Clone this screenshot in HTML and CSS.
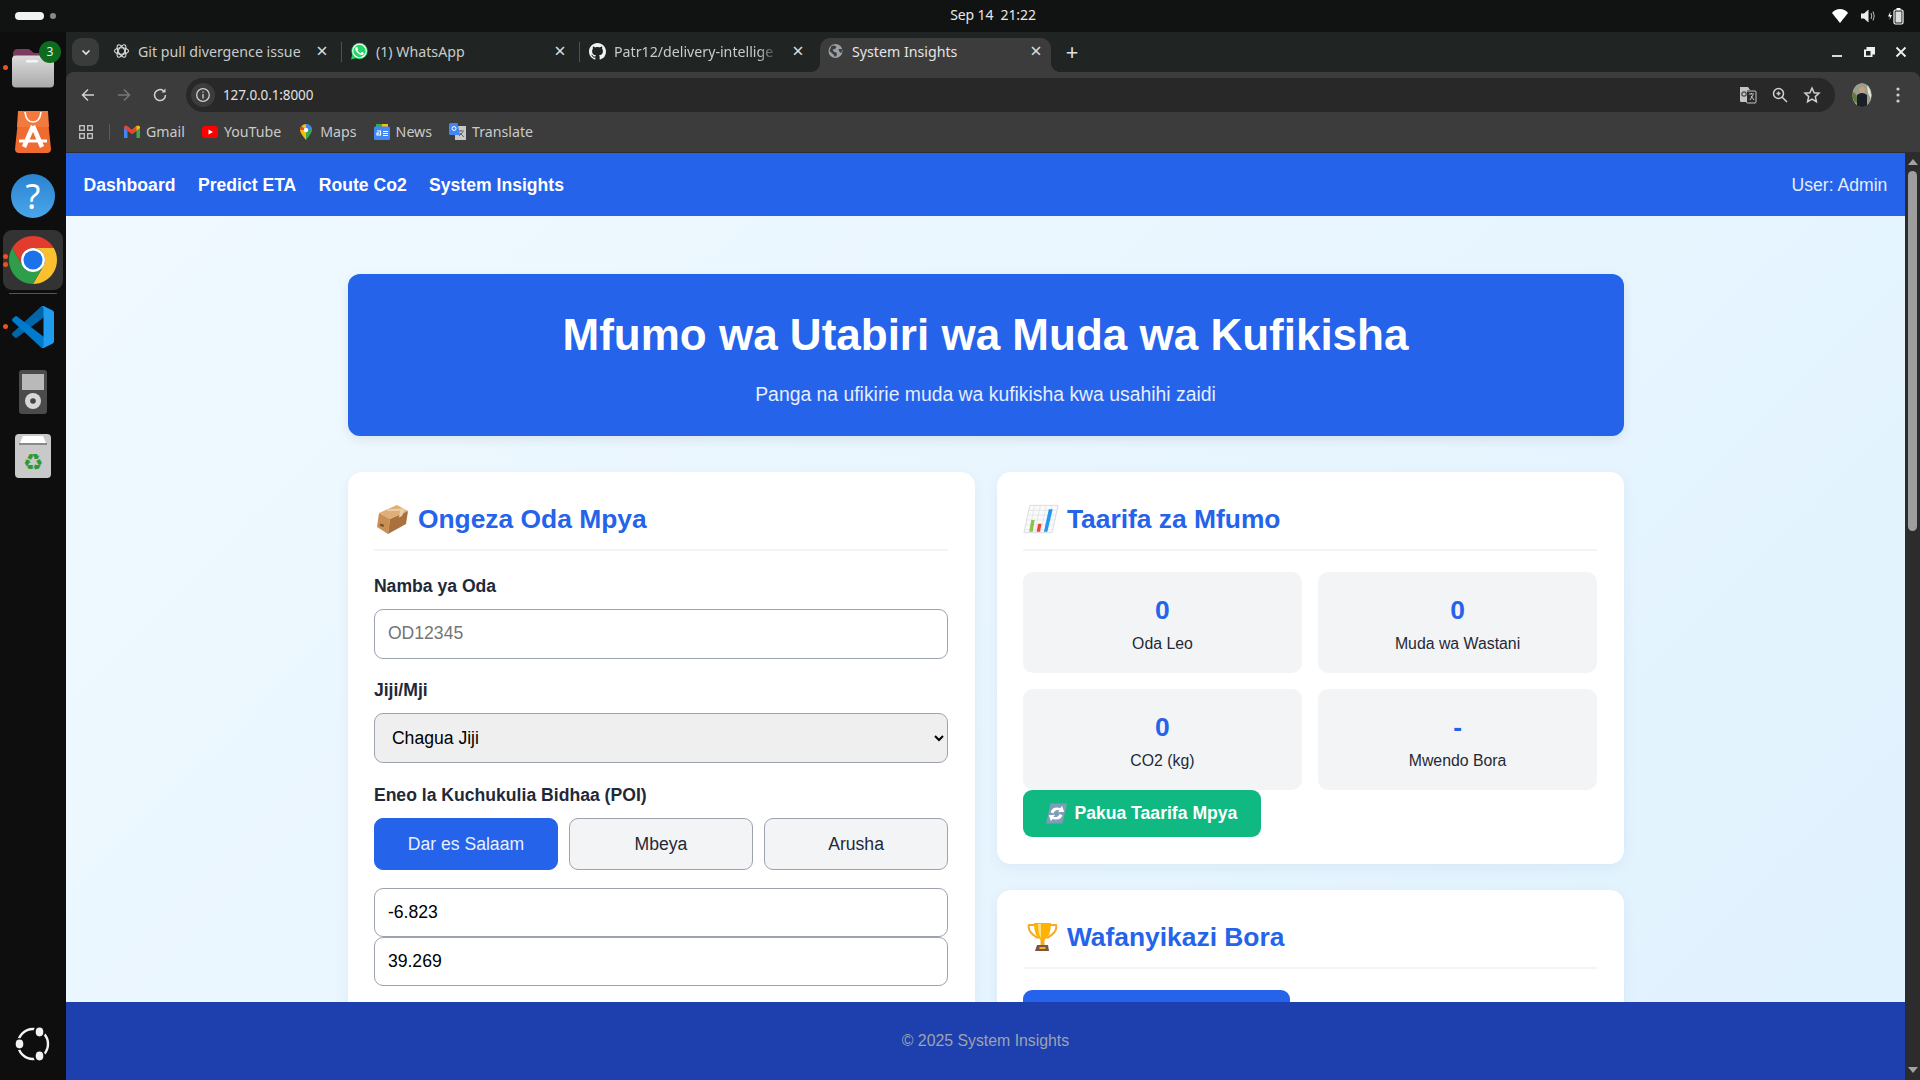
FILE: index.html
```html
<!DOCTYPE html>
<html lang="sw">
<head>
<meta charset="utf-8">
<title>System Insights</title>
<link rel="stylesheet" href="styles.css">
</head>
<body>
<div class="desktop">
  <header class="topbar">
    <div class="workspaces"><span class="ws-pill"></span><span class="ws-dot"></span></div>
    <div class="clock">Sep 14&nbsp;&nbsp;21:22</div>
    <div class="tray">
      <svg width="18" height="16" viewBox="0 0 18 16"><path d="M1 5C5-.3 13-.3 17 5L9 15Z" fill="#fff"/></svg>
      <svg width="16" height="16" viewBox="0 0 16 16"><path d="M1 5.500H4L8.500 1.500V14.500L4 10.500H1Z" fill="#eee"/><path d="M11 5Q12.500 8 11 11M13 3.500Q15.500 8 13 12.500" stroke="#bbb" fill="none"/></svg>
      <svg width="18" height="18" viewBox="0 0 18 18"><path d="M3.500 4.500 1 9.500H3L2.500 13 5 8H3Z" fill="#fff"/><rect x="7" y="3" width="9" height="14" rx="1.500" fill="none" stroke="#fff" stroke-width="1.200"/><rect x="9.500" y="1" width="4" height="2" fill="#fff"/><rect x="8.500" y="4.500" width="6" height="11" fill="#ddd"/></svg>
    </div>
  </header>

  <div class="workarea">
    <nav class="dock">
      <div class="dock-slot">
        <span class="run-dot"></span>
        <svg width="46" height="44" viewBox="0 0 46 44"><path d="M3 8Q3 3 8 3H19L24 7H38Q42 7 42 11V20H3Z" fill="#7c3a5e"/><rect x="2" y="9.500" width="42" height="32" rx="4" fill="url(#fg)"/><rect x="16" y="14" width="12" height="2.500" rx="1" fill="#f4f4f4"/><defs><linearGradient id="fg" x1="0" y1="0" x2="0" y2="1"><stop offset="0" stop-color="#dcdcdc"/><stop offset="1" stop-color="#a9a9a9"/></linearGradient></defs></svg>
        <span class="dock-badge">3</span>
      </div>
      <div class="dock-slot">
        <svg width="36" height="42" viewBox="0 0 36 42"><path d="M4 0H32L36 38Q36 42 32 42H4Q0 42 0 38Z" fill="#ef6b2f"/><path d="M3 0H33L34 16H2Z" fill="#f27a3f"/><path d="M10 1Q11 11 18 11T26 1" fill="none" stroke="#fff" stroke-width="1.600"/><path d="M18 15 9 36M18 15 27 36" stroke="#fff" stroke-width="4.500" fill="none"/><path d="M4 30H32" stroke="#fff" stroke-width="3"/></svg>
      </div>
      <div class="dock-slot">
        <span class="help-icon">?</span>
      </div>
      <div class="dock-slot dock-active">
        <span class="run-dot run-dot-a"></span><span class="run-dot run-dot-b"></span>
        <svg width="48" height="48" viewBox="0 0 48 48"><path d="M24 12H44.780A24 24 0 0 0 3.220 12L13.600 30A12 12 0 0 1 24 12Z" fill="#e33b2e"/><path d="M24 12H44.780A24 24 0 0 1 24 48L34.400 30A12 12 0 0 0 24 12Z" fill="#fbc02d"/><path d="M3.220 12A24 24 0 0 0 24 48L34.400 30A12 12 0 0 1 13.600 30Z" fill="#2f9e4b"/><circle cx="24" cy="24" r="12" fill="#fff"/><circle cx="24" cy="24" r="9.500" fill="#1a73e8"/></svg>
      </div>
      <div class="dock-sep"></div>
      <div class="dock-slot dock-shift">
        <span class="run-dot"></span>
        <svg width="42" height="42" viewBox="0 0 100 100"><path d="M96.460 10.800 75.860.870a6.230 6.230 0 0 0-7.100 1.210L1.330 63.570a4.170 4.170 0 0 0 0 6.160l5.510 5.010a4.170 4.170 0 0 0 5.320.240L93.390 13.800c2.730-2.070 6.640-.130 6.640 3.300v-.240a6.250 6.250 0 0 0-3.540-5.630z" fill="#0065a9"/><path d="M96.460 89.200 75.860 99.130a6.230 6.230 0 0 1-7.100-1.210L1.330 36.430a4.170 4.170 0 0 1 0-6.160l5.510-5.010a4.170 4.170 0 0 1 5.320-.240l81.230 61.620c2.730 2.070 6.640.130 6.640-3.300v.240a6.250 6.250 0 0 1-3.540 5.630z" fill="#007acc"/><path d="M75.860 99.130a6.220 6.220 0 0 1-7.100-1.200c2.300 2.300 6.240.670 6.240-2.590V4.660c0-3.260-3.940-4.890-6.240-2.590a6.220 6.220 0 0 1 7.100-1.200l20.600 9.910A6.250 6.250 0 0 1 100 16.400v67.200a6.250 6.250 0 0 1-3.540 5.630z" fill="#1f9cf0"/></svg>
      </div>
      <div class="dock-slot">
        <svg width="28" height="44" viewBox="0 0 28 44"><rect width="28" height="44" rx="3" fill="#4b4b4b"/><rect x="3" y="4" width="22" height="16" fill="#b9b9b9"/><circle cx="14" cy="31" r="8" fill="#d6d6d6"/><circle cx="14" cy="31" r="2.800" fill="#444"/></svg>
      </div>
      <div class="dock-slot">
        <svg width="36" height="44" viewBox="0 0 36 44"><rect width="36" height="44" rx="4" fill="#c9c9c9"/><path d="M5 9 8 2H28L31 9Z" fill="#fff"/><rect x="4" y="9" width="28" height="2" fill="#8a8a8a"/><text x="18" y="36" class="recycle">♻</text></svg>
      </div>
      <div class="dock-slot dock-bottom">
        <svg width="36" height="36" viewBox="0 0 36 36"><circle cx="18" cy="18" r="15" fill="none" stroke="#f2f2f2" stroke-width="2.400"/><circle cx="24.500" cy="5.500" r="6" fill="#0e0e0e"/><circle cx="24.500" cy="30.500" r="6" fill="#0e0e0e"/><circle cx="4" cy="18" r="6" fill="#0e0e0e"/><ellipse cx="24.500" cy="6" rx="3.800" ry="4.400" fill="#f2f2f2"/><ellipse cx="24.500" cy="30" rx="3.800" ry="4.400" fill="#f2f2f2"/><ellipse cx="4.500" cy="18" rx="3.800" ry="4.400" fill="#f2f2f2"/></svg>
      </div>
    </nav>

    <div class="browser">
      <div class="tabstrip">
        <button class="tab-search"><svg width="12" height="12" viewBox="0 0 12 12"><path d="M2.500 4.500 6 8l3.500-3.500" fill="none" stroke="#e6e6e6" stroke-width="1.600"/></svg></button>
        <div class="tab">
          <svg class="tab-ico" width="16" height="16" viewBox="0 0 16 16" fill="none" stroke="#ddd" stroke-width="1.100"><ellipse cx="8" cy="8" rx="7" ry="3.200"/><ellipse cx="8" cy="8" rx="7" ry="3.200" transform="rotate(60 8 8)"/><ellipse cx="8" cy="8" rx="7" ry="3.200" transform="rotate(120 8 8)"/></svg>
          <span class="tab-title">Git pull divergence issue</span><span class="tab-close">×</span>
        </div>
        <span class="tab-sep"></span>
        <div class="tab">
          <svg class="tab-ico" width="18" height="18" viewBox="0 0 24 24"><circle cx="12" cy="12" r="11.500" fill="#25d366"/><path d="M0 24 2 16 8 22Z" fill="#25d366"/><circle cx="12" cy="12" r="9.500" fill="#25d366" stroke="#fff" stroke-width="1.600"/><path d="M17.472 14.382c-.297-.149-1.758-.867-2.030-.967-.273-.099-.471-.148-.670.150-.197.297-.767.966-.940 1.164-.173.199-.347.223-.644.075-.297-.150-1.255-.463-2.390-1.475-.883-.788-1.480-1.761-1.653-2.059-.173-.297-.018-.458.130-.606.134-.133.298-.347.446-.520.149-.174.198-.298.298-.497.099-.198.050-.371-.025-.520-.075-.149-.669-1.612-.916-2.207-.242-.579-.487-.500-.669-.510-.173-.008-.371-.010-.570-.010-.198 0-.520.074-.792.372-.272.297-1.040 1.016-1.040 2.479 0 1.462 1.065 2.875 1.213 3.074.149.198 2.096 3.200 5.077 4.487.709.306 1.262.489 1.694.625.712.227 1.360.195 1.871.118.571-.085 1.758-.719 2.006-1.413.248-.694.248-1.289.173-1.413-.074-.124-.272-.198-.570-.347" fill="#fff"/></svg>
          <span class="tab-title">(1) WhatsApp</span><span class="tab-close">×</span>
        </div>
        <span class="tab-sep"></span>
        <div class="tab">
          <svg class="tab-ico" width="17" height="17" viewBox="0 0 16 16"><path fill="#f2f2f2" d="M8 0C3.580 0 0 3.580 0 8c0 3.540 2.290 6.530 5.470 7.590.400.070.550-.170.550-.380 0-.190-.010-.820-.010-1.490-2.010.370-2.530-.490-2.690-.940-.090-.230-.480-.940-.820-1.130-.280-.150-.680-.520-.010-.530.630-.010 1.080.580 1.230.820.720 1.210 1.870.870 2.330.660.070-.520.280-.870.510-1.070-1.780-.200-3.640-.890-3.640-3.950 0-.870.310-1.590.820-2.150-.080-.200-.360-1.020.080-2.120 0 0 .670-.210 2.200.820.640-.180 1.320-.270 2-.270s1.360.090 2 .270c1.530-1.040 2.200-.820 2.200-.820.440 1.100.160 1.920.080 2.120.510.560.820 1.270.820 2.150 0 3.070-1.870 3.750-3.650 3.950.290.250.540.730.540 1.480 0 1.070-.010 1.930-.010 2.200 0 .210.150.460.550.380A8.013 8.013 0 0016 8c0-4.420-3.580-8-8-8z"/></svg>
          <span class="tab-title tab-fade">Patr12/delivery-intellige</span><span class="tab-close">×</span>
        </div>
        <div class="tab tab-active">
          <svg class="tab-ico" width="14" height="14" viewBox="0 0 14 14"><circle cx="7" cy="7" r="7" fill="#9aa0a6"/><path d="M3 2 6 1.500 8 3 6.500 5 4 5.500 5.500 8 8 8.500 8.500 11 6.500 13 5 10.500 1 7ZM10 5H13.500L13 9 11 8Z" fill="#3c3c3c"/></svg>
          <span class="tab-title">System Insights</span><span class="tab-close">×</span>
        </div>
        <span class="tab-new">+</span>
        <div class="win-controls">
          <svg width="32" height="16" viewBox="0 0 32 16"><path d="M11 12H21" stroke="#f0f0f0" stroke-width="1.800"/></svg>
          <svg width="32" height="16" viewBox="0 0 32 16"><path d="M13.500 3H22V10.500H19.500V13H11V5.500H13.500Z" fill="#f0f0f0"/><rect x="13" y="7" width="4.500" height="4.500" fill="#202423"/></svg>
          <svg width="32" height="16" viewBox="0 0 32 16"><path d="M11.500 3.500 20.500 12.500M20.500 3.500 11.500 12.500" stroke="#f0f0f0" stroke-width="1.800"/></svg>
        </div>
      </div>

      <div class="toolbar">
        <div class="addr-row">
          <span class="tb-btn"><svg width="16" height="16" viewBox="0 0 16 16" fill="none" stroke="#d0d0d0" stroke-width="1.500"><path d="M14 8H2.500M8 2.500 2.500 8 8 13.500"/></svg></span>
          <span class="tb-btn"><svg width="16" height="16" viewBox="0 0 16 16" fill="none" stroke="#777" stroke-width="1.500"><path d="M2 8H13.500M8 2.500 13.500 8 8 13.500"/></svg></span>
          <span class="tb-btn"><svg width="16" height="16" viewBox="0 0 16 16" fill="none" stroke="#d0d0d0" stroke-width="1.500"><path d="M13.500 8A5.500 5.500 0 1 1 11.500 3.800"/><path d="M13.500 1.500V5.500H9.500" fill="#d0d0d0" stroke="none"/></svg></span>
          <div class="omnibox">
            <span class="site-info"><svg width="16" height="16" viewBox="0 0 16 16" fill="none" stroke="#d0d0d0" stroke-width="1.300"><circle cx="8" cy="8" r="6.300"/><path d="M8 7V11.500M8 4.500V5.800"/></svg></span>
            <span class="url">127.0.0.1:8000</span>
            <div class="omni-actions">
              <span class="omni-btn"><svg width="18" height="18" viewBox="0 0 18 18"><path d="M1 1H9L11 4H8L9 16H2Q1 16 1 15Z" fill="#c4c4c4"/><rect x="7.500" y="5" width="9.500" height="12" rx="1" fill="#2a2a2a" stroke="#c4c4c4"/><path d="M10 8H15M12.500 7V8M11 14 14 9M12 10 15 14" stroke="#c4c4c4" fill="none"/><circle cx="5" cy="8" r="2.200" fill="none" stroke="#444" stroke-width="1.200"/></svg></span>
              <span class="omni-btn"><svg width="18" height="18" viewBox="0 0 18 18" fill="none" stroke="#d0d0d0" stroke-width="1.500"><circle cx="7.500" cy="7.500" r="5"/><path d="M11 11 16 16M5.500 7.500H9.500M7.500 5.500V9.500"/></svg></span>
              <span class="omni-btn"><svg width="18" height="18" viewBox="0 0 18 18" fill="none" stroke="#d0d0d0" stroke-width="1.500"><path d="M9 2 11.100 6.700 16 7.200 12.300 10.600 13.400 15.700 9 13.100 4.600 15.700 5.700 10.600 2 7.200 6.900 6.700Z"/></svg></span>
            </div>
          </div>
          <span class="avatar"><svg width="20" height="24" viewBox="0 0 20 24"><ellipse cx="10" cy="12" rx="10" ry="12" fill="#9a9f8c"/><path d="M0 12Q2 6 5 14V20L2 18Z" fill="#5e7a3c"/><path d="M5 24V12Q10 8 15 12V24Z" fill="#1a1f2a"/><circle cx="10" cy="7" r="3" fill="#c89f84"/><path d="M15 2Q20 8 19 16L16 10Z" fill="#e4e4e0"/></svg></span>
          <span class="menu-btn"><svg width="4" height="16" viewBox="0 0 4 16"><circle cx="2" cy="2" r="1.600" fill="#d0d0d0"/><circle cx="2" cy="8" r="1.600" fill="#d0d0d0"/><circle cx="2" cy="14" r="1.600" fill="#d0d0d0"/></svg></span>
        </div>
        <div class="bookmarks">
          <svg class="apps" width="14" height="14" viewBox="0 0 14 14" fill="none" stroke="#c8c8c8" stroke-width="1.300"><rect x=".7" y=".7" width="4.600" height="4.600"/><rect x="8.700" y=".7" width="4.600" height="4.600"/><rect x=".7" y="8.700" width="4.600" height="4.600"/><rect x="8.700" y="8.700" width="4.600" height="4.600"/></svg>
          <span class="bm-sep"></span>
          <a class="bm"><svg width="16" height="14" viewBox="0 0 16 14"><path d="M0 2.500V13H3.500V5.500Z" fill="#4285f4"/><path d="M16 2.500V13H12.500V5.500Z" fill="#34a853"/><path d="M0 2Q1-.5 3.500 1L8 5 8 9 0 3Z" fill="#ea4335"/><path d="M16 2Q15-.5 12.500 1L8 5 8 9 16 3Z" fill="#fbbc04"/><path d="M3.500 1.500 8 5.200 12.500 1.500V5.500L8 9 3.500 5.500Z" fill="#ea4335"/></svg><span>Gmail</span></a>
          <a class="bm"><svg width="16" height="12" viewBox="0 0 16 12"><rect width="16" height="12" rx="3" fill="#f00"/><path d="M6.500 3.500 11 6 6.500 8.500Z" fill="#fff"/></svg><span>YouTube</span></a>
          <a class="bm"><svg width="16" height="16" viewBox="-2 0 16 16"><path d="M6 0A6 6 0 0 1 12 6Q12 9 6 16Z" fill="#34a853"/><path d="M6 0A6 6 0 0 0 0 6Q0 9 6 16Z" fill="#fbbc04"/><path d="M6 0A6 6 0 0 1 12 6H6Z" fill="#4285f4"/><path d="M1.500 2 6 6H0Q0 3.500 1.500 2Z" fill="#ea4335"/><circle cx="6" cy="6" r="2.200" fill="#fff"/></svg><span>Maps</span></a>
          <a class="bm"><svg width="16" height="16" viewBox="0 0 16 16"><rect x="2" y="0" width="12" height="5" fill="#34a853"/><rect x="8" y="0" width="6" height="5" fill="#fbbc04"/><rect y="2.500" width="16" height="13.500" rx="1.500" fill="#4285f4"/><path d="M3 7H6.500V11H3V9.200H5M9 7.500H14M9 9.500H14M9 11.500H14" fill="none" stroke="#fff" stroke-width="1.200"/></svg><span>News</span></a>
          <a class="bm"><svg width="17" height="17" viewBox="0 0 17 17"><rect x="6" y="3" width="11" height="14" fill="#c8c8c8"/><path d="M9 8H15M12 7V8M10 13 14 9M11 10 15 14" stroke="#666" fill="none"/><path d="M1.500 0H8.500L11 12H1.500Q0 12 0 10.500V1.500Q0 0 1.500 0Z" fill="#4285f4"/><circle cx="5" cy="5.500" r="2" fill="none" stroke="#fff"/></svg><span>Translate</span></a>
        </div>
      </div>

      <div class="viewport">
        <div class="page">
          <header class="app-nav">
            <div class="nav-links">
              <a class="nav-link">Dashboard</a>
              <a class="nav-link">Predict ETA</a>
              <a class="nav-link">Route Co2</a>
              <a class="nav-link">System Insights</a>
            </div>
            <div class="nav-user">User: Admin</div>
          </header>

          <main class="content">
            <div class="container">
              <section class="hero">
                <h1>Mfumo wa Utabiri wa Muda wa Kufikisha</h1>
                <p>Panga na ufikirie muda wa kufikisha kwa usahihi zaidi</p>
              </section>
              <div class="columns">
                <section class="card card-long">
                  <h2 class="card-title">
                    <svg class="emoji-box" width="33" height="30" viewBox="0 0 33 30"><path d="M3 9 21 1 32 7 14 15Z" fill="#e0ae78"/><path d="M3 9 14 15 12 30 1 23Z" fill="#c98f55"/><path d="M14 15 32 7 30 20 12 30Z" fill="#a9713d"/><path d="M9 5.500 27 4.500 29 5.500 26 12 23 13.500 24 6.800 12 7Z" fill="#ecd0aa"/><rect x="4" y="20" width="4" height="2.500" fill="#7a5230" transform="rotate(20 6 21)"/></svg>
                    <span>Ongeza Oda Mpya</span>
                  </h2>
                  <div class="field">
                    <label class="field-label">Namba ya Oda</label>
                    <input class="text-input" type="text" placeholder="OD12345">
                  </div>
                  <div class="field">
                    <label class="field-label">Jiji/Mji</label>
                    <select class="select-input"><option>Chagua Jiji</option></select>
                  </div>
                  <div class="field field-poi">
                    <label class="field-label">Eneo la Kuchukulia Bidhaa (POI)</label>
                    <div class="poi-row">
                      <button class="poi poi-on">Dar es Salaam</button>
                      <button class="poi">Mbeya</button>
                      <button class="poi">Arusha</button>
                    </div>
                  </div>
                  <input class="text-input coord" type="text" value="-6.823">
                  <input class="text-input coord" type="text" value="39.269">
                </section>

                <div class="side">
                  <section class="card">
                    <h2 class="card-title">
                      <svg class="emoji-chart" width="36" height="30" viewBox="0 0 37 30"><path d="M7 1H36L30 29H1Z" fill="#fafafa" stroke="#d9dde0"/><path d="M6 6H35M5 11H34M4 16H33M3 21H32M2 26H31M12 1 6 29M18 1 12 29M24 1 18 29M30 1 24 29" stroke="#dfe3e6" stroke-width=".8"/><path d="M6.500 28 8.500 16H12L10 28Z" fill="#8bc34a"/><path d="M14 28 15.500 20H19L17.500 28Z" fill="#f44336"/><path d="M21.500 28 26.500 5H30.500L25 28Z" fill="#2196f3"/></svg>
                      <span>Taarifa za Mfumo</span>
                    </h2>
                    <div class="stats">
                      <div class="stat"><div class="stat-num">0</div><div class="stat-lab">Oda Leo</div></div>
                      <div class="stat"><div class="stat-num">0</div><div class="stat-lab">Muda wa Wastani</div></div>
                      <div class="stat"><div class="stat-num">0</div><div class="stat-lab">CO2 (kg)</div></div>
                      <div class="stat"><div class="stat-num">-</div><div class="stat-lab">Mwendo Bora</div></div>
                    </div>
                    <button class="refresh">
                      <svg width="21" height="21" viewBox="0 0 23 22"><path d="M5 0H23L18 22H0Z" fill="#7f9cb8"/><path d="M5 9.500Q7 2.500 16 5L17.500 2.500 20 9 13 9.500 15 7.500Q10 6 8 11ZM18 13Q16 19.500 7 17L5.500 19.500 3 13 10 12.500 8 14.500Q13 16 15 11.500Z" fill="#fff"/></svg>
                      <span>Pakua Taarifa Mpya</span>
                    </button>
                  </section>
                  <section class="card">
                    <h2 class="card-title">
                      <svg class="emoji-chart" width="36" height="30" viewBox="-3 0 36 30"><path d="M9 3H3Q1 10 12 16M24 3H30Q32 10 21 16" fill="none" stroke="#f9a825" stroke-width="2"/><path d="M8 1H25Q25 15 18 18H15Q8 15 8 1Z" fill="#ffb300"/><path d="M12 2H15V16Q12 12 12 2Z" fill="#ffe082"/><rect x="14.500" y="17" width="4" height="6" fill="#f9a825"/><path d="M11 23H22L23 29H9Z" fill="#795548"/><rect x="13.500" y="25" width="6" height="2" fill="#ffb300"/></svg>
                      <span>Wafanyikazi Bora</span>
                    </h2>
                    <button class="primary-btn" aria-label="Wafanyikazi Bora"></button>
                  </section>
                </div>
              </div>
            </div>
          </main>

          <footer class="app-footer">© 2025 System Insights</footer>
        </div>
        <aside class="scrollbar">
          <span class="sb-up"></span>
          <span class="sb-thumb"></span>
          <span class="sb-down"></span>
        </aside>
      </div>
    </div>
  </div>
</div>
</body>
</html>
```
FILE: styles.css
```css
* { box-sizing: border-box; }
html, body { margin: 0; height: 100%; overflow: hidden; }
body { font-family: "Liberation Sans", Arial, sans-serif; font-size: 17.6px; background: #111; }

.desktop { width: 1920px; height: 1080px; display: flex; flex-direction: column; }

/* GNOME top bar */
.topbar { height: 32px; flex: none; background: #111212; display: grid; grid-template-columns: 1fr auto 1fr; align-items: center; padding: 0 15px; color: #e8e8e8; font: 14px "Noto Sans", sans-serif; }
.workspaces { display: flex; align-items: center; gap: 6px; }
.ws-pill { width: 29px; height: 8px; border-radius: 4px; background: #f2f2f2; }
.ws-dot { width: 6px; height: 6px; border-radius: 50%; background: #8a8a8a; }
.clock { margin-left: 66px; text-align: center; white-space: nowrap; letter-spacing: -.1px; padding-bottom: 3px; }
.tray { display: flex; justify-content: flex-end; align-items: center; gap: 11px; }

.workarea { flex: 1; min-height: 0; display: flex; }

/* dock */
.dock { width: 66px; flex: none; background: #0e0e0e; display: flex; flex-direction: column; padding-top: 4px; padding-bottom: 4px; }
.dock-slot { position: relative; height: 64px; flex: none; display: flex; align-items: center; justify-content: center; }
.dock-active { background: #333; border-radius: 9px; margin: 2px 3px; height: 60px; }
.dock-sep { height: 1px; background: #555; margin: 1px 9px 1px; flex: none; }
.dock-shift { margin-bottom: 1px; }
.dock-bottom { margin-top: auto; }
.run-dot { position: absolute; left: 3px; top: 29px; width: 5px; height: 5px; border-radius: 50%; background: #e95420; }
.dock-active .run-dot { left: 0; }
.dock-active .run-dot-a { top: 24px; }
.dock-active .run-dot-b { top: 32px; }
.dock-badge { position: absolute; left: 39px; top: 5px; width: 22px; height: 22px; border-radius: 50%; background: #0c6b1c; color: #e8f0e8; font: 12px/22px "Noto Sans", sans-serif; text-align: center; }
.help-icon { width: 44px; height: 44px; border-radius: 50%; background: linear-gradient(#2b83d0, #4aa6ea); color: #fff; font: 400 34px/44px "Noto Sans", sans-serif; text-align: center; }
.recycle { font-family: "DejaVu Sans", sans-serif; font-size: 23px; fill: #2e9a35; text-anchor: middle; }

/* browser chrome */
.browser { flex: 1; min-width: 0; display: flex; flex-direction: column; background: #202423; }
.tabstrip { height: 40px; flex: none; display: flex; align-items: flex-end; padding-left: 6px; background: #202423; color: #c9cbca; font: 14.2px "Noto Sans", sans-serif; }
.tab-search { width: 27px; height: 28px; align-self: flex-start; margin-top: 6px; margin-right: 5px; border: 0; border-radius: 9px; background: #3a3c3c; display: flex; align-items: center; justify-content: center; padding: 0; }
.tab { position: relative; width: 237px; height: 34px; flex: none; display: flex; align-items: center; padding: 0 10px 8px 0; }
.tab-ico { flex: none; margin-left: 9px; margin-right: 8px; width: 17px; }
.tab-title { flex: 1; min-width: 0; white-space: nowrap; overflow: hidden; }
.tab-fade { margin-right: 8px; -webkit-mask-image: linear-gradient(90deg, #000 86%, transparent 99%); mask-image: linear-gradient(90deg, #000 86%, transparent 99%); }
.tab-close { width: 18px; flex: none; text-align: center; font-size: 20px; line-height: 20px; color: #dcdcdc; }
.tab-sep { width: 1px; height: 20px; background: #4e5150; flex: none; align-self: flex-end; margin-bottom: 10px; }
.tab-active { width: 231px; margin-left: 3px; background: #3c3c3c; border-radius: 10px 10px 0 0; color: #e4e4e4; padding-right: 6px; }
.tab-active .tab-ico { margin-left: 7px; margin-right: 8px; }
.tab-active::before, .tab-active::after { content: ""; position: absolute; bottom: 0; width: 10px; height: 10px; }
.tab-active::before { left: -10px; background: radial-gradient(circle at 0 0, transparent 10px, #3c3c3c 10.5px); }
.tab-active::after { right: -10px; background: radial-gradient(circle at 100% 0, transparent 10px, #3c3c3c 10.5px); }
.tab-new { width: 20px; margin-left: 11px; align-self: flex-end; height: 34px; font-size: 22px; line-height: 27px; text-align: center; color: #e0e0e0; }
.win-controls { margin-left: auto; height: 34px; padding: 0 3px 6px 0; display: flex; align-items: center; }

.toolbar { height: 81px; flex: none; background: #3c3c3c; border-radius: 8px 8px 0 0; border-bottom: 1px solid #2b2d2e; display: flex; flex-direction: column; }
.addr-row { height: 34px; margin-top: 6px; flex: none; display: flex; align-items: center; padding: 0 4px; }
.tb-btn { width: 36px; height: 34px; flex: none; display: flex; align-items: center; justify-content: center; }
.omnibox { flex: 1; min-width: 0; height: 34px; margin-left: 8px; background: #282828; border-radius: 17px; display: flex; align-items: center; color: #e2e2e2; font: 13.5px "Noto Sans", sans-serif; }
.site-info { width: 24px; height: 24px; margin-left: 5px; border-radius: 50%; background: #3c3c3c; display: flex; align-items: center; justify-content: center; flex: none; }
.url { margin-left: 8px; letter-spacing: -.1px; }
.omni-actions { margin-left: auto; padding-right: 7px; display: flex; }
.omni-btn { width: 32px; display: flex; justify-content: center; }
.avatar { width: 36px; margin-left: 9px; flex: none; display: flex; justify-content: center; }
.avatar svg { border-radius: 50%; }
.menu-btn { width: 36px; flex: none; display: flex; justify-content: center; }

.bookmarks { height: 40px; flex: none; display: flex; align-items: center; padding: 0 0 1px 13px; color: #c9cbca; font: 14.2px "Noto Sans", sans-serif; }
.apps { flex: none; }
.bm-sep { width: 1px; height: 16px; background: #5a5a5a; margin-left: 16px; margin-right: 14px; flex: none; }
.bm { display: flex; align-items: center; gap: 6px; margin-right: 17px; }
.bm span { padding-bottom: 1px; }
.bm svg { flex: none; }

/* viewport */
.viewport { flex: 1; min-height: 0; display: flex; }
.page { flex: 1; min-width: 0; display: flex; flex-direction: column; }
.scrollbar { width: 15px; flex: none; background: #2c2c2c; display: flex; flex-direction: column; align-items: center; }
.sb-up { width: 0; height: 0; margin-top: 6px; border: 5px solid transparent; border-top: 0; border-bottom: 6px solid #a3a3a3; }
.sb-thumb { width: 9px; height: 360px; margin-top: 6px; border-radius: 5px; background: #9e9e9e; }
.sb-down { width: 0; height: 0; margin-top: auto; margin-bottom: 7px; border: 5px solid transparent; border-bottom: 0; border-top: 6px solid #a3a3a3; }

.app-nav { height: 63px; flex: none; background: #2563eb; display: flex; align-items: center; justify-content: space-between; padding: 2px 17.6px 0; }
.nav-links { display: flex; gap: 22.4px; }
.nav-link { font-weight: 700; color: #fff; }
.nav-user { color: #e3edff; }

.content { flex: 1; min-height: 0; overflow: hidden; background: linear-gradient(135deg, #f0f9ff, #e0f2fe); padding-top: 58px; }
.container { width: 1276px; margin: 0 auto; }

.hero { background: #2563eb; color: #fff; border-radius: 12px; padding: 24px 24px 26px; text-align: center; margin-bottom: 36px; box-shadow: 0 4px 12px rgba(0,0,0,.08); }
.hero h1 { margin: 0 0 7.500px; font-size: 44px; line-height: 73px; font-weight: 700; }
.hero p { margin: 0; font-size: 19.36px; line-height: 31px; color: #e6eeff; }

.columns { display: grid; grid-template-columns: 627px 627px; gap: 22px; align-items: start; }
.side { display: flex; flex-direction: column; gap: 26px; }
.card { background: #fff; border-radius: 14px; padding: 26.400px; box-shadow: 0 4px 14px rgba(30,64,120,.06); }
.card-long { padding-bottom: 60px; }
.card-title { margin: 0 0 21px; padding-bottom: 9px; border-bottom: 2px solid #f3f4f6; font-size: 26.4px; line-height: 42px; height: 53px; font-weight: 700; color: #2563eb; display: flex; align-items: center; gap: 8px; }
.emoji-box { flex: none; margin-left: 2px; margin-right: 1px; }
.emoji-chart { flex: none; }

.field { margin-bottom: 17.6px; }
.field-poi { margin-bottom: 18px; }
.field-label { display: block; font-weight: 700; line-height: 28.160px; margin-bottom: 8.800px; color: #1f2937; }
.text-input { display: block; width: 100%; height: 50px; border: 1px solid #9ca3af; border-radius: 9px; padding: 0 13px; font: 17.6px "Liberation Sans", sans-serif; color: #000; background: #fff; outline: 0; }
.select-input { display: block; width: 100%; height: 50px; border: 1px solid #9ca3af; border-radius: 9px; padding: 0 13px; font: 17.6px "Liberation Sans", sans-serif; color: #000; background-color: #efefef; }
.coord { height: 49px; }
.poi-row { display: grid; grid-template-columns: repeat(3, 1fr); gap: 11px; }
.poi { height: 52px; border: 1px solid #9ca3af; border-radius: 9px; background: #f3f4f6; color: #1f2937; font: 17.6px "Liberation Sans", sans-serif; padding: 2px 0 0; }
.poi-on { background: #2563eb; border-color: #2563eb; color: #e9f0ff; }

.stats { display: grid; grid-template-columns: 1fr 1fr; gap: 16px; }
.stat { height: 101px; background: #f3f4f6; border-radius: 10px; padding: 17px 8px; text-align: center; }
.stat-num { font-size: 26.4px; line-height: 42px; font-weight: 700; color: #2563eb; }
.stat-lab { font-size: 15.84px; line-height: 25px; color: #1f2937; }
.refresh { display: flex; align-items: center; gap: 7px; height: 47.500px; padding: 0 23.500px; border: 0; border-radius: 9px; background: #10b981; color: #fff; font: 700 17.6px "Liberation Sans", sans-serif; }
.primary-btn { display: block; width: 267px; height: 47px; border: 0; border-radius: 9px; background: #2563eb; }

.app-footer { height: 78px; flex: none; background: #1e40af; color: #9ca3af; font-size: 15.84px; text-align: center; padding-top: 26px; line-height: 25px; }
```
